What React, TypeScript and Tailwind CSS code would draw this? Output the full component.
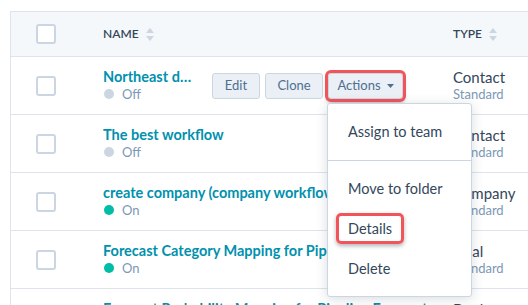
import React from 'react';

type Row = {
  name: string;
  on: boolean;
  type: string;
  actions?: boolean;
};

const rows: Row[] = [
  { name: 'Northeast d…', on: false, type: 'Contact', actions: true },
  { name: 'The best workflow', on: false, type: 'Contact' },
  { name: 'create company (company workflow)', on: true, type: 'Company' },
  { name: 'Forecast Category Mapping for Pipeline Deals', on: true, type: 'Deal' },
  { name: 'Forecast Probability Mapping for Pipeline Forecast', on: true, type: 'Deal' },
];

const SortIcon = () => (
  <svg width="8" height="13" viewBox="0 0 8 13" className="ml-[7px]">
    <path d="M4 0 L8 5 L0 5 Z" fill="#cbd6e2" />
    <path d="M4 13 L8 8 L0 8 Z" fill="#cbd6e2" />
  </svg>
);

const Checkbox = () => (
  <div className="w-[20px] h-[20px] rounded-[3px] border-2 border-[#cbd6e2] bg-white" />
);

const ActionsMenu = () => (
  <div className="absolute left-[-1px] top-[30px] w-[145px] h-[194px] bg-white border border-[#cbd6e2] rounded-[3px] shadow-[0_2px_12px_rgba(45,62,80,0.18)] z-10 text-[14.5px] text-[#33475b]">
    <div className="py-2">
      <div className="h-[40px] flex items-center pl-[20px]">Assign to team</div>
    </div>
    <div className="border-t border-[#cbd6e2]" />
    <div className="py-2">
      <div className="h-[40px] flex items-center pl-[20px]">Move to folder</div>
      <div className="h-[40px] flex items-center pl-[8px]">
        <div className="h-[31px] flex items-center px-[9px] border-[3px] border-[#f2545b] rounded-[5px] shadow-[0_2px_4px_rgba(0,0,0,0.3)]">
          Details
        </div>
      </div>
      <div className="h-[40px] flex items-center pl-[20px]">Delete</div>
    </div>
  </div>
);

const RowButtons = () => (
  <div className="flex items-center gap-[5px] ml-[19px] text-[13px] text-[#506e91]">
    <div className="w-[48px] h-[26px] flex items-center justify-center bg-[#eaf0f6] border border-[#cbd6e2] rounded-[3px]">
      Edit
    </div>
    <div className="w-[58px] h-[26px] flex items-center justify-center bg-[#eaf0f6] border border-[#cbd6e2] rounded-[3px]">
      Clone
    </div>
    <div className="relative">
      <div className="w-[75px] h-[26px] flex items-center justify-center gap-[6px] bg-[#eaf0f6] border border-[#cbd6e2] rounded-[3px] outline outline-[3px] outline-[#f2545b] shadow-[0_3px_5px_rgba(0,0,0,0.45)]">
        Actions
        <svg width="7" height="4" viewBox="0 0 7 4">
          <path d="M0 0 L7 0 L3.5 4 Z" fill="#506e91" />
        </svg>
      </div>
      <ActionsMenu />
    </div>
  </div>
);

export default function App() {
  return (
    <div className="w-[528px] h-[305px] overflow-hidden bg-white font-['Lato','Open_Sans',sans-serif]">
      <div className="ml-[10px] mt-[11px] w-[600px] border-l border-t border-[#dfe3eb]">
        {/* Header */}
        <div className="h-[45px] flex items-center bg-[#f5f8fa] border-b border-[#dfe3eb] text-[12px] font-semibold text-[#33475b]">
          <div className="w-[92px] pl-[25px]">
            <Checkbox />
          </div>
          <div className="w-[350px] flex items-center">
            NAME
            <SortIcon />
          </div>
          <div className="flex items-center">
            TYPE
            <SortIcon />
          </div>
        </div>

        {/* Rows */}
        {rows.map((row) => (
          <div key={row.name} className="h-[58px] flex items-center border-b border-[#dfe3eb]">
            <div className="w-[92px] pl-[25px]">
              <Checkbox />
            </div>
            <div className="w-[350px] flex items-center">
              <div className={`flex flex-col whitespace-nowrap ${row.actions ? 'w-[90px]' : ''}`}>
                <span className="text-[14.5px] leading-[16px] font-bold text-[#0091ae]">{row.name}</span>
                <span className="flex items-center text-[13px] leading-[16px] text-[#7c98b6] mt-[1px]">
                  <span
                    className={`inline-block w-[10px] h-[10px] rounded-full mr-[8px] ml-px ${
                      row.on ? 'bg-[#00bda5]' : 'bg-[#cbd6e2]'
                    }`}
                  />
                  {row.on ? 'On' : 'Off'}
                </span>
              </div>
              {row.actions && <RowButtons />}
            </div>
            <div className="flex flex-col whitespace-nowrap">
              <span className="text-[15px] leading-[16px] text-[#33475b]">{row.type}</span>
              <span className="text-[13px] leading-[16px] text-[#7c98b6] mt-[1px]">Standard</span>
            </div>
          </div>
        ))}
      </div>
    </div>
  );
}
